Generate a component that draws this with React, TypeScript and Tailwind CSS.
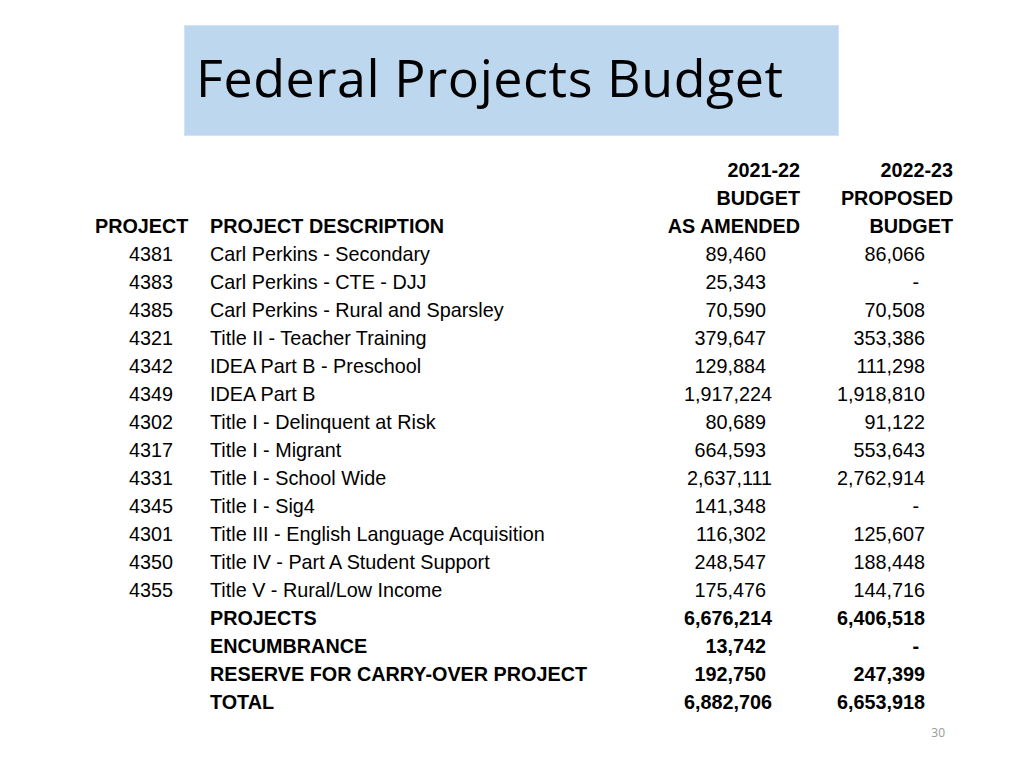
import React from "react";

type Row = { p?: string; d: string; a: string; b: string; bold?: boolean };

const rows: Row[] = [
  { p: "4381", d: "Carl Perkins - Secondary", a: "89,460", b: "86,066" },
  { p: "4383", d: "Carl Perkins - CTE - DJJ", a: "25,343", b: "-" },
  { p: "4385", d: "Carl Perkins - Rural and Sparsley", a: "70,590", b: "70,508" },
  { p: "4321", d: "Title II - Teacher Training", a: "379,647", b: "353,386" },
  { p: "4342", d: "IDEA Part B - Preschool", a: "129,884", b: "111,298" },
  { p: "4349", d: "IDEA Part B", a: "1,917,224", b: "1,918,810" },
  { p: "4302", d: "Title I - Delinquent at Risk", a: "80,689", b: "91,122" },
  { p: "4317", d: "Title I - Migrant", a: "664,593", b: "553,643" },
  { p: "4331", d: "Title I - School Wide", a: "2,637,111", b: "2,762,914" },
  { p: "4345", d: "Title I - Sig4", a: "141,348", b: "-" },
  { p: "4301", d: "Title III - English Language Acquisition", a: "116,302", b: "125,607" },
  { p: "4350", d: "Title IV - Part A Student Support", a: "248,547", b: "188,448" },
  { p: "4355", d: "Title V - Rural/Low Income", a: "175,476", b: "144,716" },
  { d: "PROJECTS", a: "6,676,214", b: "6,406,518", bold: true },
  { d: "ENCUMBRANCE", a: "13,742", b: "-", bold: true },
  { d: "RESERVE FOR CARRY-OVER PROJECT", a: "192,750", b: "247,399", bold: true },
  { d: "TOTAL", a: "6,882,706", b: "6,653,918", bold: true },
];

function NumA({ v }: { v: string }) {
  const big = v.length > 8;
  return <div className={big ? "w-[160px] text-right pr-[28px]" : "w-[160px] text-right pr-[34px]"}>{v}</div>;
}

function NumB({ v }: { v: string }) {
  const dash = v === "-";
  return <div className={dash ? "w-[153px] text-right pr-[34px]" : "w-[153px] text-right pr-[28px]"}>{v}</div>;
}

export default function App() {
  return (
    <div className="w-[1024px] h-[768px] bg-white relative overflow-hidden">
      <div className="pt-[25px] pl-[184px]">
        <div className="w-[655px] h-[111px] bg-[#bdd7ee] border border-[#d3e3f3] pl-[11px] flex items-start">
          <div
            className="mt-[17px] text-[52px] leading-[68px] tracking-[0.55px] text-black whitespace-nowrap"
            style={{ fontFamily: '"Open Sans", sans-serif' }}
          >
            Federal Projects Budget
          </div>
        </div>
      </div>

      <div
        className="mt-[20px] pl-[95px] text-[19.8px] leading-[28px] text-black"
        style={{ fontFamily: '"Liberation Sans", Arial, sans-serif' }}
      >
        <div className="flex font-bold">
          <div className="w-[115px]"></div>
          <div className="w-[430px]"></div>
          <div className="w-[160px] text-right">2021-22</div>
          <div className="w-[153px] text-right">2022-23</div>
        </div>
        <div className="flex font-bold">
          <div className="w-[115px]"></div>
          <div className="w-[430px]"></div>
          <div className="w-[160px] text-right">BUDGET</div>
          <div className="w-[153px] text-right">PROPOSED</div>
        </div>
        <div className="flex font-bold">
          <div className="w-[115px]">PROJECT</div>
          <div className="w-[430px]">PROJECT DESCRIPTION</div>
          <div className="w-[160px] text-right">AS AMENDED</div>
          <div className="w-[153px] text-right">BUDGET</div>
        </div>
        {rows.map((r, i) => (
          <div key={i} className={r.bold ? "flex font-bold" : "flex"}>
            <div className="w-[115px] text-right pr-[37px]">{r.p ?? ""}</div>
            <div className="w-[430px] whitespace-nowrap">{r.d}</div>
            <NumA v={r.a} />
            <NumB v={r.b} />
          </div>
        ))}
      </div>

      <div
        className="mt-[10px] pr-[79px] text-right text-[12px] leading-[14px] text-[#9a9a9a]"
        style={{ fontFamily: '"Open Sans", sans-serif' }}
      >
        30
      </div>
    </div>
  );
}
